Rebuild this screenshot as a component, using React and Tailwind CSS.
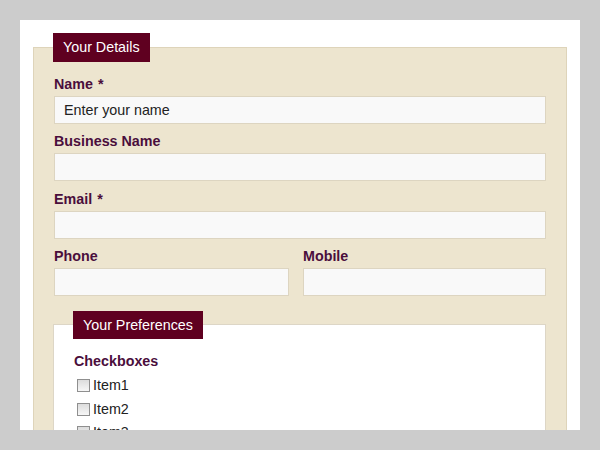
import React from "react";

const labelCls = "block h-[18px] text-[14.3px] font-bold leading-[18px] text-[#4a0e3c] mb-[3px]";
const inputCls = "block w-full h-[28px] border border-[#ddd5c1] bg-[#f9f9f9] px-[9px] text-[14.3px] text-[#222] outline-none";

function Field({ label, req, placeholder }) {
  return (
    <div>
      <label className={labelCls}>
        {label}
        {req && <span className="ml-[5px]">*</span>}
      </label>
      <input className={inputCls} placeholder={placeholder} readOnly />
    </div>
  );
}

function Check({ text }) {
  return (
    <div className="flex items-center h-[18px] text-[14.3px] text-[#222]">
      <span className="ml-[3px] mr-[3px] block w-[13px] h-[13px] border border-[#8f8f8f] bg-gradient-to-b from-[#dcdcdc] to-[#f7f7f7]" />
      <span>{text}</span>
    </div>
  );
}

export default function App() {
  return (
    <div
      className="w-[600px] h-[450px] bg-[#cccccc] pt-[20px] px-[20px] overflow-hidden"
      style={{ fontFamily: '"Liberation Sans", Arial, sans-serif' }}
    >
      <div className="w-[560px] h-[410px] bg-white overflow-hidden px-[13px] pt-[13px]">
        <fieldset className="border border-[#ded4ba] bg-[#ede5cf] pl-[20px] pr-[20px] pt-[13px] pb-[20px]">
          <legend className="-ml-px h-[29px] leading-[29px] px-[10px] bg-[#5f0020] text-white text-[14.3px]">
            Your Details
          </legend>
          <div className="flex flex-col gap-[8.33px]">
            <div>
              <label className={labelCls}>
                Name<span className="ml-[5px]">*</span>
              </label>
              <input className={inputCls + " placeholder:text-[#222]"} placeholder="Enter your name" readOnly />
            </div>
            <Field label="Business Name" />
            <Field label="Email" req />
            <div className="grid grid-cols-[235px_1fr] gap-x-[14px]">
              <Field label="Phone" />
              <Field label="Mobile" />
            </div>
          </div>
          <fieldset className="mt-[15px] -ml-px border border-[#ddd6c6] bg-white pl-[20px] pr-[20px] pt-[13px] pb-[20px]">
            <legend className="-ml-px h-[28px] leading-[28px] px-[10px] bg-[#5f0020] text-white text-[14.3px]">
              Your Preferences
            </legend>
            <div className="h-[18px] text-[14.3px] font-bold leading-[18px] text-[#4a0e3c]">Checkboxes</div>
            <div className="mt-[7px] flex flex-col gap-[5.5px]">
              <Check text="Item1" />
              <Check text="Item2" />
              <Check text="Item3" />
              <Check text="Item4" />
            </div>
          </fieldset>
        </fieldset>
      </div>
    </div>
  );
}
